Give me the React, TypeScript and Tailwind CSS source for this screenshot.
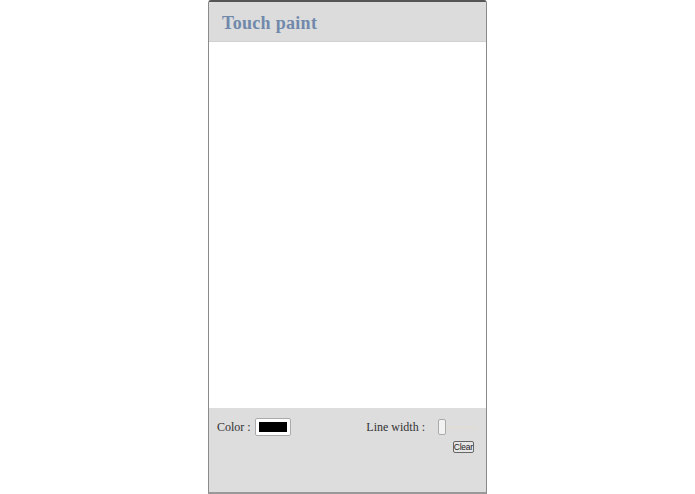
export default function App() {
  return (
    <div className="w-[695px] h-[494px] bg-white flex justify-center" style={{ fontFamily: '"Liberation Serif", serif' }}>
      <div className="w-[279px] h-[494px] flex flex-col border-x border-[#8a8a8a] border-t-2 border-t-[#555] border-b-2 border-b-[#999] rounded-t-[3px]">
        {/* Header */}
        <div className="h-[40px] bg-[#dcdcdc] flex items-center px-[13px] pt-[3px] border-b border-[#d0d0d0]">
          <h1 className="text-[18px] font-bold text-[#7089ab] tracking-[0.3px]">Touch paint</h1>
        </div>

        {/* Canvas */}
        <div className="flex-1 bg-white" />

        {/* Controls */}
        <div className="h-[84px] bg-[#dddddd] px-[8px] pt-[10px]">
          <div className="flex items-center justify-between">
            <div className="flex items-center gap-[4px] text-[12px] text-[#333]">
              <span>Color :</span>
              <div className="w-[36px] h-[18px] bg-white border border-[#aaa] rounded-[2px] p-[3px]">
                <div className="w-full h-full bg-black" />
              </div>
            </div>
            <div className="flex items-center text-[12px] text-[#333]">
              <span>Line width :</span>
              <div className="ml-[13px] w-[40px] h-[16px] flex items-center relative">
                <div className="absolute left-0 right-0 top-[8px] h-px bg-[#e6dcd0]" />
                <div className="relative w-[8px] h-[16px] bg-[#f2f2f2] border border-[#aaa] rounded-[2px]" />
              </div>
            </div>
          </div>
          <div className="flex justify-end pr-[4px] mt-[5px]">
            <button className="h-[12px] px-0 text-[8.5px] leading-[10px] text-[#222] bg-[#e6e6e6] border border-[#666] rounded-[2px] tracking-[-0.2px]" style={{ fontFamily: '"Liberation Sans", sans-serif' }}>
              Clear
            </button>
          </div>
        </div>
      </div>
    </div>
  )
}
